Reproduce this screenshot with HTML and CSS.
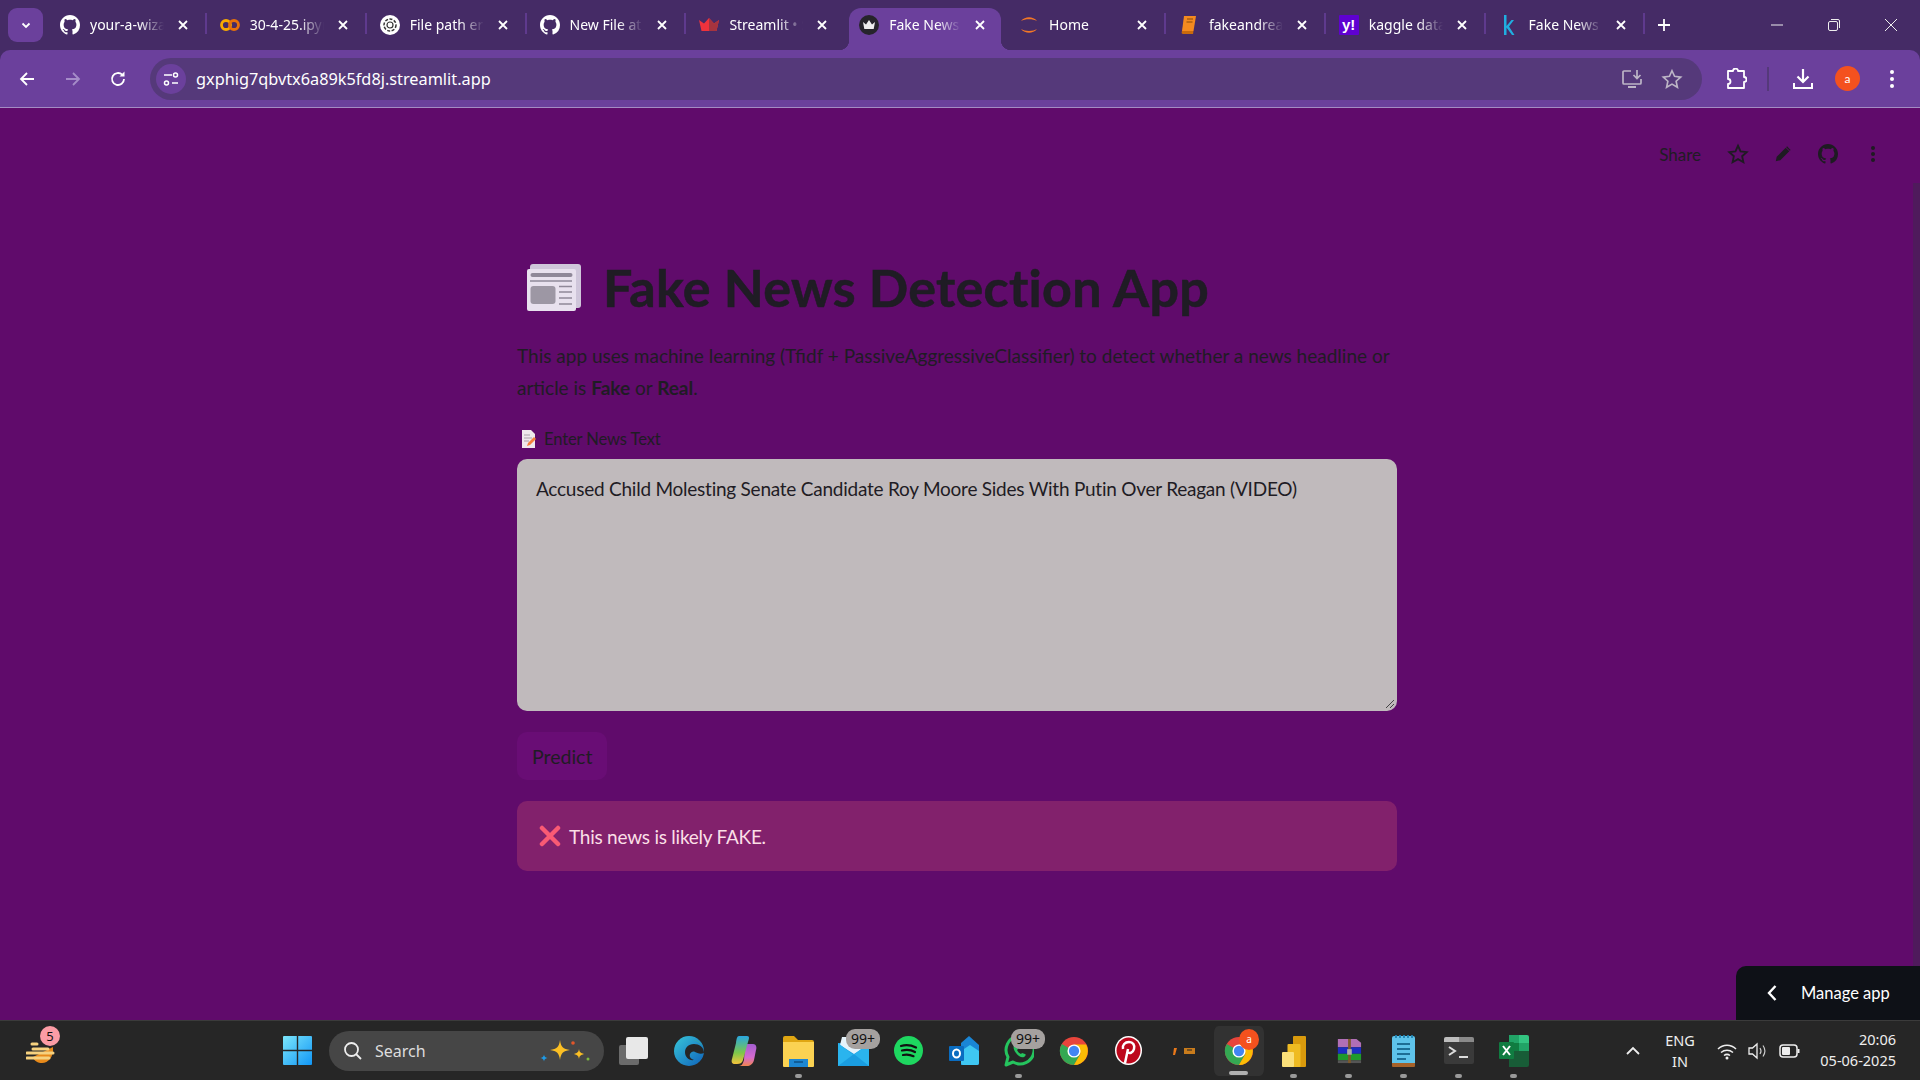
FILE: index.html
```html
<!DOCTYPE html>
<html lang="en">
<head>
    <meta charset="UTF-8">
    <title>Fake News Detection App</title>
    <link rel="stylesheet" href="styles.css">
</head>
<body>
    <svg class="defs" width="0" height="0">
        <symbol id="gh" viewBox="0 0 16 16"><path d="M8 0C3.58 0 0 3.58 0 8c0 3.54 2.29 6.53 5.47 7.59.4.07.55-.17.55-.38 0-.19-.01-.82-.01-1.49-2.01.37-2.53-.49-2.69-.94-.09-.23-.48-.94-.82-1.13-.28-.15-.68-.52-.01-.53.63-.01 1.08.58 1.23.82.72 1.21 1.87.87 2.33.66.07-.52.28-.87.51-1.07-1.78-.2-3.64-.89-3.64-3.95 0-.87.31-1.59.82-2.15-.08-.2-.36-1.02.08-2.12 0 0 .67-.21 2.2.82.64-.18 1.32-.27 2-.27s1.36.09 2 .27c1.53-1.04 2.2-.82 2.2-.82.44 1.1.16 1.92.08 2.12.51.56.82 1.27.82 2.15 0 3.07-1.87 3.75-3.65 3.95.29.25.54.73.54 1.48 0 1.07-.01 1.93-.01 2.2 0 .21.15.46.55.38A8 8 0 0 0 16 8c0-4.42-3.58-8-8-8z"/></symbol>
        <symbol id="close" viewBox="0 0 12 12"><path d="M2 2l8 8M10 2l-8 8" fill="none" stroke="currentColor" stroke-width="1.8"/></symbol>
        <symbol id="crown" viewBox="0 0 20 20"><circle cx="10" cy="10" r="10" fill="#26242b"/><path d="M4 7l3 2.500L10 5l3 4.500L16 7l-1.300 7H5.300z" fill="#eee"/></symbol>
        <symbol id="chrome" viewBox="0 0 32 32"><circle cx="16" cy="16" r="15" fill="#e8453c"/><path d="M16 16L3 8.500A15 15 0 0 0 16 31l7-12z" fill="#34a853"/><path d="M16 9h13a15 15 0 0 1-13 22l7-12z" fill="#fbbc05"/><circle cx="16" cy="16" r="7" fill="#fff"/><circle cx="16" cy="16" r="5.500" fill="#4285f4"/></symbol>
    </svg>

    <div class="tabstrip">
        <div class="tab-list-btn">
            <svg width="12" height="12" viewBox="0 0 12 12"><path d="M2.500 4.500L6 8l3.500-3.500" fill="none" stroke="#fff" stroke-width="1.800"/></svg>
        </div>
        <div class="tabs">
            <div class="tab">
                <svg class="favicon" fill="#fff"><use href="#gh"/></svg>
                <span class="tab-title">your-a-wizard</span>
                <svg class="tab-close"><use href="#close"/></svg>
            </div>
            <div class="tab">
                <svg class="favicon" viewBox="0 0 20 20"><circle cx="6" cy="10" r="4.500" fill="none" stroke="#f9ab00" stroke-width="2.800"/><circle cx="14" cy="10" r="4.500" fill="none" stroke="#e8710a" stroke-width="2.800"/></svg>
                <span class="tab-title">30-4-25.ipynb</span>
                <svg class="tab-close"><use href="#close"/></svg>
            </div>
            <div class="tab">
                <svg class="favicon" viewBox="0 0 20 20"><circle cx="10" cy="10" r="10" fill="#fff"/><circle cx="10" cy="10" r="6" fill="none" stroke="#333" stroke-width="1.500" stroke-dasharray="3 1.500"/><circle cx="10" cy="10" r="3" fill="none" stroke="#333" stroke-width="1.200"/></svg>
                <span class="tab-title">File path error</span>
                <svg class="tab-close"><use href="#close"/></svg>
            </div>
            <div class="tab">
                <svg class="favicon" fill="#fff"><use href="#gh"/></svg>
                <span class="tab-title">New File at</span>
                <svg class="tab-close"><use href="#close"/></svg>
            </div>
            <div class="tab no-sep">
                <svg class="favicon" viewBox="0 0 20 20"><path d="M0 5l5 3.500L10 3l5 5.500L20 5l-2.500 11h-15z" fill="#f0323c"/><path d="M10 3l5 5.500L20 5l-2.500 11H10z" fill="#a5343f"/></svg>
                <span class="tab-title">Streamlit • Share</span>
                <svg class="tab-close"><use href="#close"/></svg>
            </div>
            <div class="tab active">
                <svg class="favicon"><use href="#crown"/></svg>
                <span class="tab-title">Fake News Detection</span>
                <svg class="tab-close"><use href="#close"/></svg>
            </div>
            <div class="tab">
                <svg class="favicon" viewBox="0 0 20 20"><path d="M2 6c4-5 12-5 16 0-4-2.500-12-2.500-16 0zM2 14c4 5 12 5 16 0-4 2.500-12 2.500-16 0z" fill="#f37726"/></svg>
                <span class="tab-title">Home</span>
                <svg class="tab-close"><use href="#close"/></svg>
            </div>
            <div class="tab">
                <svg class="favicon" viewBox="0 0 20 20"><path d="M5 1h12l-2.500 15H3z" fill="#f58a1f"/><path d="M3 16c-1 2 0 3 1 3h10l.500-3z" fill="#c96a0c"/><path d="M8 4h6M7.500 7h6" stroke="#8a4a08"/></svg>
                <span class="tab-title">fakeandreal-news</span>
                <svg class="tab-close"><use href="#close"/></svg>
            </div>
            <div class="tab">
                <svg class="favicon" viewBox="0 0 20 20"><rect width="20" height="20" rx="1" fill="#5f01d1"/><text x="3" y="15" class="yahoo-mark">y!</text></svg>
                <span class="tab-title">kaggle dataset</span>
                <svg class="tab-close"><use href="#close"/></svg>
            </div>
            <div class="tab">
                <svg class="favicon" viewBox="0 0 20 20"><path d="M5 0h2.500v11l5-6H15l-5 6.500L15.500 20H13l-5.500-7.500V20H5z" fill="#20aee0"/></svg>
                <span class="tab-title">Fake News Detection</span>
                <svg class="tab-close"><use href="#close"/></svg>
            </div>
        </div>
        <div class="new-tab">
            <svg width="14" height="14" viewBox="0 0 14 14"><path d="M7 1v12M1 7h12" stroke="#fff" stroke-width="1.800"/></svg>
        </div>
        <div class="win-controls">
            <svg width="14" height="14" viewBox="0 0 14 14"><path d="M1 7h12" stroke="#eee" stroke-width="1"/></svg>
            <svg width="14" height="14" viewBox="0 0 14 14"><rect x="1.500" y="3.500" width="9" height="9" rx="1.500" fill="none" stroke="#eee"/><path d="M4 1.500h7a1.500 1.500 0 0 1 1.500 1.500v7" fill="none" stroke="#eee"/></svg>
            <svg width="14" height="14" viewBox="0 0 14 14"><path d="M1 1l12 12M13 1L1 13" stroke="#eee" stroke-width="1"/></svg>
        </div>
    </div>

    <div class="toolbar">
        <div class="nav-btns">
            <svg width="18" height="18" viewBox="0 0 18 18"><path d="M16 9H3M9 3L3 9l6 6" fill="none" stroke="#fff" stroke-width="1.800"/></svg>
            <svg width="18" height="18" viewBox="0 0 18 18"><path d="M2 9h13M9 3l6 6-6 6" fill="none" stroke="#a58cc8" stroke-width="1.800"/></svg>
            <svg width="18" height="18" viewBox="0 0 18 18"><path d="M15 9a6 6 0 1 1-1.800-4.300" fill="none" stroke="#fff" stroke-width="1.800"/><path d="M15.500 1.500v5h-5z" fill="#fff"/></svg>
        </div>
        <div class="omnibox">
            <div class="site-chip">
                <svg width="18" height="18" viewBox="0 0 18 18"><path d="M2 5h8M10 13h6" stroke="#fff" stroke-width="1.600"/><circle cx="13.500" cy="5" r="2" fill="none" stroke="#fff" stroke-width="1.500"/><circle cx="4.500" cy="13" r="2" fill="none" stroke="#fff" stroke-width="1.500"/></svg>
            </div>
            <span class="url">gxphig7qbvtx6a89k5fd8j.streamlit.app</span>
            <div class="omni-actions">
                <svg width="22" height="22" viewBox="0 0 22 22"><path d="M10 3H3a1 1 0 0 0-1 1v11a1 1 0 0 0 1 1h16a1 1 0 0 0 1-1v-4" fill="none" stroke="#bdb5c6" stroke-width="1.700"/><path d="M16 2v8M12.500 7l3.500 3.500L19.500 7" fill="none" stroke="#bdb5c6" stroke-width="1.700"/><path d="M7 18h8v2H7z" fill="#bdb5c6"/></svg>
                <svg width="22" height="22" viewBox="0 0 24 24"><path d="M12 3l2.800 6.100 6.700.8-5 4.500 1.400 6.600-5.900-3.400L6.100 21l1.400-6.600-5-4.500 6.700-.8z" fill="none" stroke="#bdb5c6" stroke-width="1.800"/></svg>
            </div>
        </div>
        <div class="tool-btns">
            <svg class="tool-puzzle" width="22" height="22" viewBox="0 0 22 22"><path d="M3 3h5a2.500 2.500 0 0 1 5 0h6v6a2.500 2.500 0 0 1 0 5v6H3v-4a2.500 2.500 0 0 0 0-5V8.500z" fill="none" stroke="#fff" stroke-width="1.800" stroke-linejoin="round"/></svg>
            <span class="tool-sep"></span>
            <svg class="tool-dl" width="22" height="22" viewBox="0 0 22 22"><path d="M11 1v13M5.500 8.500L11 14l5.500-5.500" fill="none" stroke="#fff" stroke-width="2.200"/><path d="M2 15v5h18v-5" fill="none" stroke="#fff" stroke-width="2"/></svg>
            <span class="avatar">a</span>
            <svg class="tool-menu" width="6" height="20" viewBox="0 0 6 20"><circle cx="3" cy="3" r="2" fill="#fff"/><circle cx="3" cy="10" r="2" fill="#fff"/><circle cx="3" cy="17" r="2" fill="#fff"/></svg>
        </div>
    </div>

    <div class="page">
        <div class="st-header">
            <span class="share">Share</span>
            <span class="hdr-icon"><svg width="22" height="22" viewBox="0 0 24 24"><path d="M12 3l2.800 6.100 6.700.8-5 4.500 1.400 6.600-5.900-3.400L6.100 21l1.400-6.600-5-4.500 6.700-.8z" fill="none" stroke="#1e1b22" stroke-width="2"/></svg></span>
            <span class="hdr-icon"><svg width="18" height="18" viewBox="0 0 20 20"><path d="M2 18l1-5L13 3l4 4L7 17zM14.500 1.500l4 4 -1 1-4-4z" fill="#1e1b22"/></svg></span>
            <span class="hdr-icon"><svg width="20" height="20" fill="#1e1b22"><use href="#gh"/></svg></span>
            <span class="hdr-icon"><svg width="6" height="18" viewBox="0 0 6 18"><circle cx="3" cy="3" r="2" fill="#1e1b22"/><circle cx="3" cy="9" r="2" fill="#1e1b22"/><circle cx="3" cy="15" r="2" fill="#1e1b22"/></svg></span>
        </div>

        <main class="block">
            <h1 class="title">
                <svg class="news-icon" width="54" height="47" viewBox="0 0 54 47">
                    <rect x="3" width="51" height="44" rx="3" fill="#cfc6da"/>
                    <rect y="5" width="49" height="42" rx="2" fill="#e8e1ee"/>
                    <rect x="3.500" y="9" width="42" height="4" rx="2" fill="#8f8898"/>
                    <path d="M3 17h42" stroke="#8f8898" stroke-width="1.500"/>
                    <rect x="3.500" y="22" width="25" height="18" rx="3" fill="#9d97a4"/>
                    <path d="M32 22.500h13M32 28h13M32 34h13M32 40h13" stroke="#8f8898" stroke-width="1.500"/>
                </svg>
                Fake News Detection App
            </h1>
            <p class="intro">This app uses machine learning (Tfidf + PassiveAggressiveClassifier) to detect whether a news headline or article is <strong>Fake</strong> or <strong>Real</strong>.</p>
            <label class="field-label">
                <svg width="17" height="18" viewBox="0 0 17 18"><path d="M2 0h9l4 4v14H2z" fill="#efe9ec"/><path d="M4 5h6M4 8h8M4 11h5" stroke="#a9a0a8"/><path d="M7 16l1-3 6-6 2 2-6 6z" fill="#f4813c"/></svg>
                Enter News Text
            </label>
            <div class="textarea">
                Accused Child Molesting Senate Candidate Roy Moore Sides With Putin Over Reagan (VIDEO)
                <svg class="resize-grip" width="10" height="10" viewBox="0 0 10 10"><path d="M9 1L1 9M9 5L5 9" stroke="#444" stroke-width="1"/></svg>
            </div>
            <button class="predict">Predict</button>
            <div class="alert">
                <svg width="22" height="22" viewBox="0 0 22 22"><path d="M3 3l16 16M19 3L3 19" stroke="#f95a74" stroke-width="4.500" stroke-linecap="round"/></svg>
                This news is likely FAKE.
            </div>
        </main>

        <div class="scroll-thumb"></div>
        <div class="manage-app">
            <svg width="12" height="18" viewBox="0 0 12 18"><path d="M9.500 2L3 9l6.500 7" fill="none" stroke="#fff" stroke-width="2.400"/></svg>
            Manage app
        </div>
    </div>

    <footer class="taskbar">
        <div class="widget">
            <svg width="30" height="32" viewBox="0 0 30 32"><path d="M27 12c1 10-5 16-11 16-4 0-8-2-9-6z" fill="#e88a1a"/><path d="M6 9h5M7 14h15M1 18h26M1 23h22" stroke="#f6d27f" stroke-width="3" stroke-linecap="round"/></svg>
            <span class="widget-badge">5</span>
        </div>
        <svg class="start" width="29" height="29" viewBox="0 0 29 29">
            <defs><linearGradient id="win" x1="0" y1="0" x2="1" y2="1"><stop offset="0" stop-color="#7ce6fb"/><stop offset="1" stop-color="#1196f5"/></linearGradient></defs>
            <path d="M0 1a1 1 0 0 1 1-1h12.800v13.800H0zM15.200 0H28a1 1 0 0 1 1 1v12.800H15.200zM0 15.200h13.800V29H1a1 1 0 0 1-1-1zM15.200 15.200H29V28a1 1 0 0 1-1 1H15.200z" fill="url(#win)"/>
        </svg>
        <div class="search">
            <svg width="20" height="20" viewBox="0 0 20 20"><circle cx="8.500" cy="8.500" r="6.500" fill="none" stroke="#eee" stroke-width="1.800"/><path d="M13 13l5 5" stroke="#eee" stroke-width="1.800"/></svg>
            <span>Search</span>
            <svg class="sparkle" width="52" height="28" viewBox="0 0 52 28"><path d="M20 3c1 7 3 9 10 10-7 1-9 3-10 10-1-7-3-9-10-10 7-1 9-3 10-10z" fill="#fbbf24"/><path d="M39 12c.5 3 1.500 4 5 5-3.500 1-4.500 2-5 5-.5-3-1.500-4-5-5 3.500-1 4.500-2 5-5z" fill="#fbbf24"/><path d="M4 17.500c.3 2 1 3 3.500 3.500-2.500.5-3.200 1.500-3.500 3.500-.3-2-1-3-3.500-3.500 2.500-.5 3.200-1.500 3.500-3.500z" fill="#1e9be8"/><circle cx="33" cy="6" r="1.800" fill="#e2562a"/><circle cx="48" cy="22" r="1.500" fill="#7dbb3f"/></svg>
        </div>
        <div class="task-icons">
            <div class="task">
                <svg width="30" height="30" viewBox="0 0 30 30"><rect y="9" width="20" height="20" rx="2" fill="#6b6b6b"/><rect x="7" y="1" width="22" height="22" rx="2" fill="#e8e8e8"/></svg>
            </div>
            <div class="task">
                <svg width="30" height="32" viewBox="0 0 30 32"><defs><linearGradient id="edge" x1="0" y1="0" x2="1" y2="1"><stop offset="0" stop-color="#38c6d9"/><stop offset="1" stop-color="#0f62ba"/></linearGradient></defs><circle cx="15" cy="16" r="15" fill="url(#edge)"/><path d="M30 18c0-6-5-9-10-9-6 0-9 4-9 8 0 5 4 9 9 8-3-1-5-3-4-6 1-2 3-3 5-2 2 .5 5 3 9 1z" fill="#262626"/><path d="M30 17c0-6-4-11-11-12 6 0 11 5 11 12z" fill="#55c858"/></svg>
            </div>
            <div class="task">
                <svg width="28" height="32" viewBox="0 0 28 32"><defs><linearGradient id="cop" x1="0" y1="0" x2="0" y2="1"><stop offset="0" stop-color="#2aa7e0"/><stop offset=".6" stop-color="#7dc74a"/><stop offset="1" stop-color="#f5c33b"/></linearGradient><linearGradient id="cop2" x1="0" y1="0" x2="0" y2="1"><stop offset="0" stop-color="#a45ed0"/><stop offset=".6" stop-color="#d56ad0"/><stop offset="1" stop-color="#f1844f"/></linearGradient></defs><path d="M15 9h8c3 0 4 3 3 6l-2 10c-1 4-4 6-7 6h-8c3 0 4-3 5-6z" fill="url(#cop2)"/><path d="M9 1h8c3 0 2 3 1 6l-5 18c-1 3-3 4-6 4H5c-3 0-4-2-3-5l4-16c.5-4 1-7 3-7z" fill="url(#cop)"/></svg>
            </div>
            <div class="task open">
                <svg width="31" height="32" viewBox="0 0 31 32"><path d="M0 3a2 2 0 0 1 2-2h9l4 4h14a2 2 0 0 1 2 2v4H0z" fill="#e0a612"/><path d="M0 7h31v24a1 1 0 0 1-1 1H1a1 1 0 0 1-1-1z" fill="#fbd252"/><path d="M6 24h19v8H6z" fill="#1d86d1"/><path d="M11 27h9" stroke="#0c4f85" stroke-width="1.500"/></svg>
            </div>
            <div class="task">
                <svg width="31" height="30" viewBox="0 0 31 30"><path d="M0 7h31v23H0z" fill="#1a9de0"/><path d="M4 1h20l4 9-12 8L2 9z" fill="#e6f3fb"/><path d="M0 7l15.500 12L31 7v23l-15-12L0 30z" fill="#2ab4ee"/></svg>
                <span class="count-badge">99+</span>
            </div>
            <div class="task">
                <svg width="29" height="29" viewBox="0 0 29 29"><circle cx="14.500" cy="14.500" r="14.500" fill="#1ed760"/><path d="M7 10c5-1.500 10-1 15 1.500M8 14.500c4-1 9-.8 13 1.500M9 19c3.500-.8 7-.5 10.500 1.200" fill="none" stroke="#111" stroke-width="2.200" stroke-linecap="round"/></svg>
            </div>
            <div class="task">
                <svg width="30" height="32" viewBox="0 0 30 32"><path d="M20 1l10 9v18a2 2 0 0 1-2 2H12V8z" fill="#1a86d6"/><path d="M12 16l9-6 9 6v12a2 2 0 0 1-2 2H14a2 2 0 0 1-2-2z" fill="#3fc7f2"/><rect y="11" width="15" height="15" rx="1" fill="#0a6cc0"/><ellipse cx="7.500" cy="18.500" rx="3.500" ry="4" fill="none" stroke="#fff" stroke-width="2"/></svg>
            </div>
            <div class="task open">
                <svg width="30" height="32" viewBox="0 0 30 32"><path d="M2 30l2-8a14 14 0 1 1 5 5z" fill="none" stroke="#25c45e" stroke-width="3" stroke-linejoin="round"/><path d="M11 10c-2 1-2 4 1 8s6 5 8 4 2-3 1-3l-3-1-1 1c-2-1-3-2-4-4l1-1-1-4z" fill="#25c45e"/></svg>
                <span class="count-badge">99+</span>
            </div>
            <div class="task">
                <svg width="30" height="30"><use href="#chrome"/></svg>
            </div>
            <div class="task">
                <svg width="27" height="29" viewBox="0 0 27 29"><ellipse cx="13.500" cy="14.500" rx="13.500" ry="14.500" fill="#fff"/><ellipse cx="13.500" cy="14.500" rx="12" ry="13" fill="#bd081c"/><path d="M10 27l3-14M8 13c-1-4 2-7 6-7s6 3 5 7-5 5-6 3" fill="none" stroke="#fff" stroke-width="2.500"/></svg>
            </div>
            <div class="task">
                <svg width="24" height="10" viewBox="0 0 24 10"><path d="M2 2h3l-2 7H1z" fill="#e8781a"/><rect x="12" y="2" width="11" height="6" fill="#c97c1c"/><path d="M8 1h2M15 4h5" stroke="#222"/></svg>
            </div>
            <div class="task active">
                <svg width="30" height="30"><use href="#chrome"/></svg>
                <span class="chrome-profile">a</span>
            </div>
            <div class="task open">
                <svg width="24" height="32" viewBox="0 0 24 32"><rect x="11" y="1" width="13" height="31" rx="1" fill="#d99a0c"/><rect x="5.500" y="9" width="13" height="23" rx="1" fill="#efbb22"/><rect y="17" width="12" height="15" rx="1" fill="#fbe07a"/></svg>
            </div>
            <div class="task open">
                <svg width="26" height="26" viewBox="0 0 28 28"><path d="M2 1h20l5 4v5H2z" fill="#b06fb5"/><path d="M2 10h25v7H2z" fill="#1c2dc2"/><path d="M2 17h25v7H2z" fill="#1f9a2c"/><path d="M2 24h25v3H2z" fill="#555"/><path d="M13 1h3v26h-3z" fill="#7d5a2c"/><rect x="12" y="12" width="5" height="6" fill="#aaa"/></svg>
            </div>
            <div class="task open">
                <svg width="24" height="34" viewBox="0 0 24 34"><rect y="2" width="23" height="29" rx="2" fill="#5ec3ea"/><path d="M0 29h23v3a1 1 0 0 1-1 1H1a1 1 0 0 1-1-1z" fill="#a5622a"/><path d="M4 1v3M8 1v3M12 1v3M16 1v3M20 1v3" stroke="#2184b3" stroke-width="1.800"/><path d="M5 10h13M5 15h13M5 20h13M5 25h9" stroke="#1d6e95" stroke-width="2"/></svg>
            </div>
            <div class="task open">
                <svg width="30" height="27" viewBox="0 0 30 27"><rect width="30" height="27" rx="2" fill="#3a3a3a"/><path d="M0 2a2 2 0 0 1 2-2h13v5H0z" fill="#bdbdbd"/><path d="M15 0h13a2 2 0 0 1 2 2v3H15z" fill="#8a8a8a"/><path d="M5 10l6 4-6 4" fill="none" stroke="#ddd" stroke-width="2"/><path d="M15 20h9" stroke="#ddd" stroke-width="2"/></svg>
            </div>
            <div class="task open">
                <svg width="30" height="33" viewBox="0 0 30 33"><path d="M10 1h18a2 2 0 0 1 2 2v6H10z" fill="#33c481"/><path d="M20 1h-10v8h10z" fill="#21a366"/><path d="M10 9h10v8H10z" fill="#107c41"/><path d="M20 9h10v8H20z" fill="#21a366"/><path d="M10 17h20v14a2 2 0 0 1-2 2H10z" fill="#185c37"/><rect y="8" width="15" height="17" rx="1" fill="#107c41"/><path d="M4 12l7 9M11 12l-7 9" stroke="#fff" stroke-width="2"/></svg>
            </div>
        </div>
        <div class="tray">
            <svg class="tray-up" width="16" height="10" viewBox="0 0 16 10"><path d="M2 8l6-6 6 6" fill="none" stroke="#eee" stroke-width="1.800"/></svg>
            <div class="lang">ENG<br>IN</div>
            <svg width="20" height="18" viewBox="0 0 20 18"><path d="M1 7c5-5 13-5 18 0M4 10.500c3.500-3 8.500-3 12 0M7 13.500c2-1.500 4-1.500 6 0" fill="none" stroke="#eee" stroke-width="1.500"/><circle cx="10" cy="16" r="1.500" fill="#eee"/></svg>
            <svg width="20" height="20" viewBox="0 0 20 20"><path d="M1 7h3.500L9 3v14l-4.500-4H1z" fill="none" stroke="#eee" stroke-width="1.300"/><path d="M12 7c1.200 1.800 1.200 4.200 0 6M15 4.500c2.300 3.300 2.300 7.700 0 11" fill="none" stroke="#ccc" stroke-width="1.200"/></svg>
            <svg width="21" height="14" viewBox="0 0 21 14"><rect x="1" y="1" width="17" height="12" rx="3" fill="none" stroke="#eee" stroke-width="1.500"/><rect x="3" y="3" width="8" height="8" rx="1" fill="#eee"/><path d="M19.500 5v4" stroke="#eee" stroke-width="2"/></svg>
            <div class="clock">20:06<br>05-06-2025</div>
        </div>
    </footer>
</body>
</html>
```
FILE: styles.css
```css
* {
    box-sizing: border-box;
}
body {
    margin: 0;
    height: 1080px;
    overflow: hidden;
    display: flex;
    flex-direction: column;
    font-family: "Lato", "Noto Sans", sans-serif;
    background-color: #452b66;
}
.defs {
    position: absolute;
}

/* Browser tabs */
.tabstrip {
    height: 50px;
    flex: none;
    display: flex;
    align-items: flex-end;
    padding-left: 8px;
    background-color: #452b66;
    color: #fff;
}
.tab-list-btn {
    width: 35px;
    height: 34px;
    margin-bottom: 8px;
    margin-right: 3px;
    display: flex;
    align-items: center;
    justify-content: center;
    border-radius: 9px;
    background-color: #6b409c;
}
.tabs {
    display: flex;
}
.tab {
    width: 159.85px;
    height: 42px;
    padding: 0 17px 9px 14px;
    display: flex;
    align-items: center;
    gap: 10px;
    position: relative;
}
.tab::after {
    content: "";
    position: absolute;
    right: -1px;
    top: 5px;
    width: 2px;
    height: 21px;
    background-color: #5f3a8e;
}
.tab.no-sep::after {
    display: none;
}
.tab.active {
    width: 151.85px;
    margin: 0 4px;
    padding: 0 15px 9px 10px;
    border-radius: 12px 12px 0 0;
    background-color: #6b409c;
}
.tab.active::before,
.tab.active::after {
    content: "";
    position: absolute;
    top: auto;
    bottom: 0;
    width: 10px;
    height: 10px;
}
.tab.active::before {
    left: -10px;
    background: radial-gradient(circle at 0 0, transparent 10px, #6b409c 10.5px);
}
.tab.active::after {
    right: -10px;
    background: radial-gradient(circle at 100% 0, transparent 10px, #6b409c 10.5px);
}
.favicon {
    width: 20px;
    height: 20px;
    flex: none;
}
.yahoo-mark {
    font: bold 15px "Liberation Sans", sans-serif;
    fill: #fff;
}
.tab-title {
    flex: 1;
    min-width: 0;
    margin-right: 3px;
    overflow: hidden;
    white-space: nowrap;
    font-family: "Noto Sans", sans-serif;
    font-size: 14px;
    -webkit-mask-image: linear-gradient(to right, #000 66%, transparent 100%);
    mask-image: linear-gradient(to right, #000 66%, transparent 100%);
}
.tab-close {
    width: 12px;
    height: 12px;
    flex: none;
    color: #fff;
}
.new-tab {
    margin: 0 0 9px 13px;
    height: 32px;
    display: flex;
    align-items: center;
}
.win-controls {
    margin-left: auto;
    height: 50px;
    width: 150px;
    padding-right: 22px;
    display: flex;
    align-items: center;
    justify-content: space-between;
    align-self: flex-start;
}

/* Address bar row */
.toolbar {
    height: 58px;
    flex: none;
    display: flex;
    align-items: center;
    border-bottom: 1px solid #a48cc4;
    border-radius: 10px 10px 0 0;
    background-color: #6b409c;
}
.nav-btns {
    width: 150px;
    padding: 0 23px 0 18px;
    display: flex;
    align-items: center;
    justify-content: space-between;
}
.omnibox {
    width: 1552px;
    height: 42px;
    padding: 0 19px 0 6px;
    display: flex;
    align-items: center;
    border-radius: 21px;
    background-color: #55397a;
}
.site-chip {
    width: 30px;
    height: 30px;
    margin-right: 10px;
    display: flex;
    align-items: center;
    justify-content: center;
    border-radius: 50%;
    background-color: #6b409c;
}
.url {
    color: #fff;
    font-family: "Noto Sans", sans-serif;
    font-size: 16.3px;
}
.omni-actions {
    margin-left: auto;
    display: flex;
    gap: 18px;
    align-items: center;
}
.tool-btns {
    flex: 1;
    display: flex;
    align-items: center;
}
.tool-puzzle {
    margin-left: 23px;
}
.tool-sep {
    width: 2px;
    height: 24px;
    margin: 0 23px 0 20px;
    background-color: #55397a;
}
.avatar {
    width: 25px;
    height: 25px;
    margin: 0 0 0 21px;
    display: flex;
    align-items: center;
    justify-content: center;
    border-radius: 50%;
    background-color: #f4511e;
    color: #fff;
    font-size: 12px;
}
.tool-menu {
    margin-left: 29px;
}

/* Streamlit page */
.page {
    flex: 1;
    padding-right: 6px;
    position: relative;
    background-color: #600b6b;
    color: #1f1c24;
}
.st-header {
    height: 36px;
    margin-top: 28px;
    padding-right: 19px;
    display: flex;
    justify-content: flex-end;
    align-items: center;
}
.share {
    font-size: 17px;
    margin-right: 14px;
}
.hdr-icon {
    width: 45px;
    display: flex;
    justify-content: center;
}
.block {
    width: 880px;
    margin: 0 auto;
    padding-top: 79px;
}
.title {
    margin: 0;
    height: 72px;
    padding-left: 10px;
    display: flex;
    align-items: center;
    gap: 22px;
    font-size: 52px;
    font-weight: 700;
    letter-spacing: 0.3px;
    line-height: 1.2;
    white-space: nowrap;
    -webkit-text-stroke: 0.6px #1f1c24;
}
.news-icon {
    flex: none;
}
.intro {
    margin: 17px 0 0;
    font-size: 19px;
    line-height: 32px;
}
.intro strong {
    font-weight: 700;
}
.field-label {
    margin-top: 23px;
    padding-left: 3px;
    height: 24px;
    display: flex;
    align-items: center;
    gap: 7px;
    font-size: 16.5px;
    letter-spacing: -0.1px;
}
.textarea {
    height: 252px;
    margin-top: 8px;
    padding: 15px 19px;
    position: relative;
    border-radius: 10px;
    background-color: #c0babc;
    font-size: 19px;
    letter-spacing: -0.24px;
    line-height: 30px;
}
.resize-grip {
    position: absolute;
    right: 2px;
    bottom: 2px;
}
.predict {
    height: 48px;
    margin-top: 21px;
    padding: 0 15px;
    display: block;
    border: none;
    border-radius: 10px;
    background-color: #690d75;
    color: #1f1c24;
    font-family: inherit;
    font-size: 19.5px;
}
.alert {
    height: 70px;
    margin-top: 21px;
    padding: 0 22px;
    display: flex;
    align-items: center;
    gap: 8px;
    border-radius: 10px;
    background-color: #82216c;
    color: #fbdfe6;
    font-size: 19px;
    letter-spacing: -0.24px;
}
.scroll-thumb {
    position: absolute;
    right: 0;
    top: 75px;
    bottom: 0;
    width: 7px;
    background-color: #4f1a5c;
}
.manage-app {
    position: absolute;
    right: 0;
    bottom: 0;
    width: 184px;
    height: 54px;
    padding-left: 30px;
    display: flex;
    align-items: center;
    gap: 23px;
    border-radius: 10px 0 0 0;
    background-color: #0e1117;
    color: #fff;
    font-size: 16.5px;
}

/* Windows taskbar */
.taskbar {
    height: 60px;
    flex: none;
    display: flex;
    align-items: center;
    border-top: 1px solid #3b3b3b;
    background-color: #262626;
    color: #eee;
    font-family: "Noto Sans", sans-serif;
}
.widget {
    width: 283px;
    padding-left: 26px;
    position: relative;
    display: flex;
}
.widget-badge {
    position: absolute;
    left: 40px;
    top: -9px;
    width: 20px;
    height: 20px;
    display: flex;
    align-items: center;
    justify-content: center;
    border-radius: 50%;
    background-color: #fb9ca5;
    color: #111;
    font-size: 13px;
}
.start {
    flex: none;
}
.search {
    width: 275px;
    height: 40px;
    margin-left: 17px;
    padding: 0 12px 0 14px;
    display: flex;
    align-items: center;
    gap: 12px;
    border-radius: 20px;
    background-color: #464646;
    color: #ddd;
    font-size: 16px;
}
.sparkle {
    margin-left: auto;
}
.task-icons {
    display: flex;
    margin-left: 2px;
}
.task {
    width: 55px;
    height: 50px;
    position: relative;
    display: flex;
    align-items: center;
    justify-content: center;
}
.task.open::after,
.task.active::after {
    content: "";
    position: absolute;
    left: 24px;
    bottom: -2px;
    width: 7px;
    height: 4px;
    border-radius: 2px;
    background-color: #9a9a9a;
}
.task.active {
    padding: 0 2.5px;
    background-clip: content-box;
    border-radius: 7px;
    background-color: #323232;
}
.task.active::after {
    left: 18px;
    width: 19px;
    bottom: 1px;
    background-color: #b0b0b0;
}
.count-badge {
    position: absolute;
    left: 20px;
    top: 3px;
    width: 34px;
    height: 20px;
    display: flex;
    align-items: center;
    justify-content: center;
    border-radius: 9px;
    background-color: #a5a19f;
    color: #111;
    font-size: 14px;
}
.chrome-profile {
    position: absolute;
    left: 28px;
    top: 3px;
    width: 20px;
    height: 21px;
    display: flex;
    align-items: center;
    justify-content: center;
    border-radius: 50%;
    background-color: #f4511e;
    color: #fff;
    font-size: 10px;
}
.tray {
    flex: 1;
    padding-right: 24px;
    display: flex;
    align-items: center;
}
.tray-up {
    margin-left: 84px;
}
.lang {
    width: 48px;
    margin: 0 13px 0 15px;
    text-align: center;
    font-size: 14.5px;
    line-height: 21px;
}
.tray svg + svg {
    margin-left: 11px;
}
.clock {
    margin-left: auto;
    padding-bottom: 2px;
    text-align: right;
    font-size: 14.5px;
    line-height: 21px;
}
```
